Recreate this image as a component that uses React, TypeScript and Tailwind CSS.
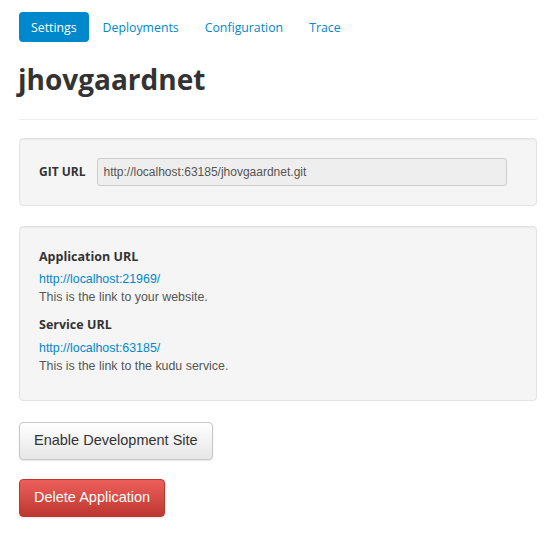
export default function App() {
  const tabs = ["Settings", "Deployments", "Configuration", "Trace"];

  return (
    <main className="min-h-screen bg-white px-[19px] pt-[12px] pb-8 font-['Liberation_Sans',Arial,sans-serif] text-[12px] text-[#333]">
      {/* Nav pills */}
      <nav className="flex items-center gap-[2px] font-['Open_Sans',sans-serif] text-[12.3px]">
        {tabs.map((t, i) => (
          <a
            key={t}
            className={
              i === 0
                ? "h-[30px] px-[12px] pt-[2px] flex items-center rounded-[4px] bg-[#0088cc] text-white"
                : "h-[30px] px-[12px] pt-[2px] flex items-center text-[#0088cc]"
            }
          >
            {t}
          </a>
        ))}
      </nav>

      <h1 className="mt-[17px] font-['Open_Sans',sans-serif] text-[28px] font-bold leading-[40px] text-[#333] -ml-[1px]">
        jhovgaardnet
      </h1>

      <hr className="mt-[20px] border-t border-[#eeeeee]" />

      {/* Git url well */}
      <section className="mt-[18px] rounded-[4px] border border-[#e3e3e3] bg-[#f5f5f5] px-[19px] py-[19px] shadow-[inset_0_1px_1px_rgba(0,0,0,0.05)]">
        <div className="flex items-center gap-[11px]">
          <label className="font-['Open_Sans',sans-serif] text-[12px] font-bold text-[#333]">GIT URL</label>
          <div className="w-[410px] h-[28px] flex items-center rounded-[3px] border border-[#ccc] bg-[#eeeeee] px-[6px] text-[12px] text-[#555]">
            http://localhost:63185/jhovgaardnet.git
          </div>
        </div>
      </section>

      {/* URLs well */}
      <section className="mt-[20px] rounded-[4px] border border-[#e3e3e3] bg-[#f5f5f5] px-[19px] pt-[20px] pb-[25px] text-[12.4px] shadow-[inset_0_1px_1px_rgba(0,0,0,0.05)]">
        <h4 className="font-['Open_Sans',sans-serif] text-[12.5px] font-bold leading-[20px] text-[#333]">Application URL</h4>
        <div className="mt-[3px] leading-[18px]">
          <a className="block text-[#0088cc]">http://localhost:21969/</a>
          <span className="block text-[#555]">This is the link to your website.</span>
        </div>
        <h4 className="mt-[9px] font-['Open_Sans',sans-serif] text-[12.5px] font-bold leading-[20px] text-[#333]">Service URL</h4>
        <div className="mt-[4px] leading-[18px]">
          <a className="block text-[#0088cc]">http://localhost:63185/</a>
          <span className="block text-[#555]">This is the link to the kudu service.</span>
        </div>
      </section>

      {/* Actions */}
      <div className="mt-[21px] flex flex-col items-start gap-[19px]">
        <button className="h-[38px] px-[14px] rounded-[4px] border border-[#c8c8c8] bg-gradient-to-b from-white to-[#e6e6e6] text-[14.5px] text-[#333] shadow-[0_1px_2px_rgba(0,0,0,0.1)]">
          Enable Development Site
        </button>
        <button className="h-[38px] px-[14px] rounded-[4px] border border-[#bd362f] bg-gradient-to-b from-[#ee5f5b] to-[#bd362f] text-[14.5px] text-white shadow-[0_1px_2px_rgba(0,0,0,0.1)]">
          Delete Application
        </button>
      </div>
    </main>
  );
}
